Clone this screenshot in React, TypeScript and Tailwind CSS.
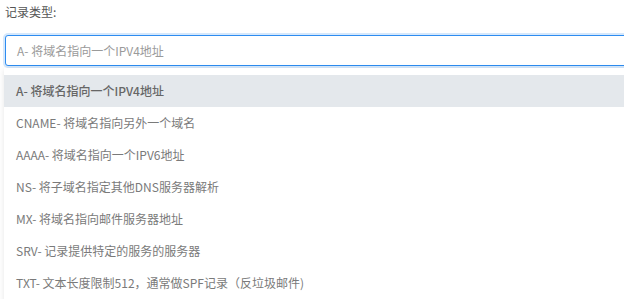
const options = [
  "A- 将域名指向一个IPV4地址",
  "CNAME- 将域名指向另外一个域名",
  "AAAA- 将域名指向一个IPV6地址",
  "NS- 将子域名指定其他DNS服务器解析",
  "MX- 将域名指向邮件服务器地址",
  "SRV- 记录提供特定的服务的服务器",
  "TXT- 文本长度限制512，通常做SPF记录（反垃圾邮件)",
];

export default function App() {
  return (
    <div className="h-[299px] w-[624px] overflow-hidden bg-white font-['Noto_Sans_CJK_SC','Noto_Sans',sans-serif] text-[12px]">
      <div className="pl-[5px] pt-[4px] leading-[16px] text-[#555]">记录类型:</div>
      <div className="mt-[15px] pl-[5px]">
        <div className="flex h-[31px] w-[660px] items-center rounded-[3px] border border-[#2d8cf0] bg-white pl-[11px] text-[#9a9a9a] shadow-[0_0_0_2px_rgba(45,140,240,0.2)]">
          A- 将域名指向一个IPV4地址
        </div>
      </div>
      <div className="ml-[4px] mt-[2px] w-[660px] bg-white py-[7px] shadow-[0_1px_6px_rgba(0,0,0,0.1)]">
        {options.map((o, i) => (
          <div
            key={o}
            className={
              i === 0
                ? "flex h-[32px] items-center bg-[#e4e8ec] pl-[12px] font-medium text-[#666]"
                : "flex h-[32px] items-center pl-[12px] text-[#7a7a7a]"
            }
          >
            {o}
          </div>
        ))}
      </div>
    </div>
  );
}
